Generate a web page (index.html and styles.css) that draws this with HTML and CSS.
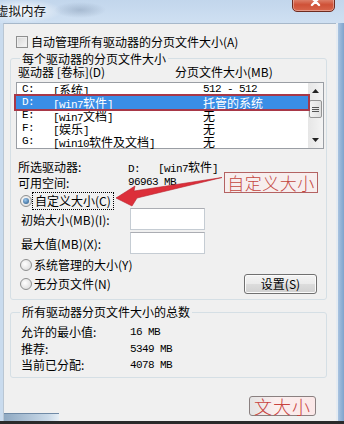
FILE: index.html
```html
<!DOCTYPE html>
<html lang="zh-CN">
<head>
<meta charset="utf-8">
<title>虚拟内存</title>
<link rel="stylesheet" href="styles.css">
</head>
<body>
<div class="window">
  <div class="titlebar">
    <span class="title">虚拟内存</span>
    <div class="close">
      <svg width="43" height="16" viewBox="0 0 43 16"><path d="M20 2 L27 9 M27 2 L20 9" stroke="#fff" stroke-width="2.4" stroke-linecap="round"/></svg>
    </div>
  </div>
  <div class="body">
    <div class="client">
      <div class="check-row"><span class="checkbox"></span><span>自动管理所有驱动器的分页文件大小(A)</span></div>

      <fieldset class="group g1">
        <legend>每个驱动器的分页文件大小</legend>
        <div class="list-head"><span class="h1">驱动器 [卷标](D)</span><span>分页文件大小(MB)</span></div>
        <div class="listbox">
          <div class="rows">
            <div class="row"><span class="c1 m">C:</span><span class="c2"><span class="m">[</span>系统<span class="m">]</span></span><span class="c3 m">512 - 512</span></div>
            <div class="row sel"><span class="c1 m">D:</span><span class="c2"><span class="m">[win7</span>软件<span class="m">]</span></span><span class="c3">托管的系统</span></div>
            <div class="row"><span class="c1 m">E:</span><span class="c2"><span class="m">[win7</span>文档<span class="m">]</span></span><span class="c3">无</span></div>
            <div class="row"><span class="c1 m">F:</span><span class="c2"><span class="m">[</span>娱乐<span class="m">]</span></span><span class="c3">无</span></div>
            <div class="row"><span class="c1 m">G:</span><span class="c2"><span class="m">[win10</span>软件及文档<span class="m">]</span></span><span class="c3">无</span></div>
          </div>
          <div class="scrollbar">
            <div class="sb-btn"><svg width="7" height="4" viewBox="0 0 7 4"><path d="M0 4 L3.5 0 L7 4Z" fill="#222"/></svg></div>
            <div class="sb-track"><div class="sb-thumb"><i></i><i></i><i></i></div></div>
            <div class="sb-btn"><svg width="7" height="4" viewBox="0 0 7 4"><path d="M0 0 L3.5 4 L7 0Z" fill="#222"/></svg></div>
          </div>
        </div>
        <div class="info">
          <div class="info-row"><span class="lab">所选驱动器:</span><span class="val"><span class="m">D:&nbsp;&nbsp;&nbsp;[win7</span>软件<span class="m">]</span></span></div>
          <div class="info-row"><span class="lab">可用空间:</span><span class="val m">96963 MB</span></div>
        </div>
        <div class="radio-row r1"><span class="radio on"></span><span class="focus">自定义大小(C)</span></div>
        <div class="size-row"><span class="size-lab">初始大小(MB)(I):</span><span class="input"></span></div>
        <div class="size-row second"><span class="size-lab">最大值(MB)(X):</span><span class="input"></span></div>
        <div class="radio-row r2"><span class="radio"></span><span>系统管理的大小(Y)</span></div>
        <div class="radio-row r3">
          <span class="radio-wrap"><span class="radio"></span><span>无分页文件(N)</span></span>
          <span class="btn">设置(S)</span>
        </div>
      </fieldset>

      <fieldset class="group g2">
        <legend>所有驱动器分页文件大小的总数</legend>
        <div class="totals">
          <div class="tot-row"><span class="lab">允许的最小值:</span><span class="m">16 MB</span></div>
          <div class="tot-row"><span class="lab">推荐:</span><span class="m">5349 MB</span></div>
          <div class="tot-row"><span class="lab">当前已分配:</span><span class="m">4078 MB</span></div>
        </div>
      </fieldset>

      <div class="bottom-row">
        <span class="strip"></span>
        <span class="ok-btn">文大小</span>
      </div>
    </div>
    <div class="rframe"></div>
  </div>

  <svg class="arrow" width="120" height="40" viewBox="0 0 120 40"><polygon points="6,28 25,16 24,21 112,7.5 27,28 22,36" fill="#dc2f3a" stroke="#b8202c" stroke-width="0.6" stroke-linejoin="round"/></svg>
  <div class="note">自定义大小</div>
</div>
</body>
</html>
```
FILE: styles.css
```css
* { box-sizing: border-box; margin: 0; padding: 0; }
html, body { width: 344px; height: 424px; overflow: hidden; }
body {
  font-family: "Noto Sans CJK SC", "Noto Sans", sans-serif;
  font-size: 12px;
  color: #000;
  background: #f0f0f0;
}
.m {
  font-family: "Liberation Mono", "Noto Sans CJK SC", monospace;
  font-size: 11px;
  letter-spacing: -0.6px;
}

.window {
  position: relative;
  width: 344px;
  height: 424px;
  display: flex;
  flex-direction: column;
  background: #c9dbee;
  border-bottom: 3px solid #2a2a2a;
}

/* title bar */
.titlebar {
  height: 23px;
  flex: none;
  display: flex;
  align-items: flex-start;
  background:
    radial-gradient(ellipse 26px 8px at 80px 10px, rgba(140,160,185,.55), rgba(140,160,185,0)),
    radial-gradient(ellipse 40px 12px at 22px 11px, rgba(255,255,255,.9), rgba(255,255,255,0)),
    linear-gradient(#c2d6ec, #cfe0f2);
}
.title {
  margin-left: -4px;
  margin-top: 3px;
  font-size: 12.5px;
  line-height: 16px;
  color: #111;
}
.close {
  margin-left: auto;
  margin-right: 9px;
  margin-top: -4px;
  width: 43px;
  height: 16px;
  border: 1px solid #6e2b20;
  border-radius: 0 0 5px 5px;
  background: linear-gradient(#e59a86, #cf5137 55%, #d8664c);
  box-shadow: inset 0 0 0 1px rgba(255,255,255,.35);
}
.close svg { display: block; margin: -1px 0 0 -1px; }

/* body */
.body {
  flex: 1;
  display: flex;
  padding-left: 3px;
}
.client {
  width: 333px;
  flex: none;
  display: flex;
  flex-direction: column;
  background: #f0f0f0;
  border-left: 1px solid #b9c6d3;
  border-top: 1px solid #a7b8ca;
}
.rframe {
  flex: 1;
  border-left: 2px solid #e4ebf2;
  background: linear-gradient(to right, #a8c3e0, #7fa3cc);
}

.check-row {
  margin-top: 11px;
  height: 13px;
  padding-left: 12px;
  display: flex;
  align-items: center;
  gap: 3px;
  line-height: 13px;
}
.checkbox {
  width: 12px;
  height: 12px;
  border: 1px solid #8e8f8f;
  background: linear-gradient(135deg, #d6d6d6, #f8f8f8);
  box-shadow: inset 0 0 0 1px #eeeeee;
}

/* group boxes */
.group {
  min-width: 0;
  width: 317px;
  margin-left: 6px;
  border: 1px solid #d5dfe5;
  border-radius: 3px;
  padding: 0 2px 0 5px;
}
.group legend {
  margin-left: 4px;
  padding: 0 2px;
  line-height: 13px;
}
.g1 { margin-top: 4px; padding-bottom: 5px; }
.g2 { margin-top: 5px; padding-bottom: 3px; }
.g2 legend { line-height: 14px; }

.list-head {
  display: flex;
  padding-left: 2px;
  line-height: 14px;
}
.list-head .h1 { width: 157px; }

.listbox {
  margin-top: 3px;
  height: 67px;
  border: 1px solid #9a9ea4;
  background: #fff;
  display: flex;
}
.rows { flex: 1; }
.row {
  display: flex;
  height: 13px;
  line-height: 13px;
  padding-left: 5px;
}
.row .c1 { width: 31px; }
.row .c2 { width: 150px; }
.row.sel {
  background: #3a8ee6;
  color: #fff;
  outline: 2px solid #a83848;
  outline-offset: 0;
  position: relative;
  margin-left: -1px;
  padding-left: 6px;
}

.scrollbar {
  width: 15px;
  display: flex;
  flex-direction: column;
  background: linear-gradient(to right, #e6e6e6, #f4f4f4);
}
.sb-btn {
  height: 16px;
  display: flex;
  align-items: center;
  justify-content: center;
}
.sb-track { flex: 1; }
.sb-thumb {
  height: 18px;
  margin: 1px 1px 0;
  border: 1px solid #959595;
  border-radius: 2px;
  background: linear-gradient(to right, #f2f2f2, #e0e0e0);
  display: flex;
  flex-direction: column;
  align-items: center;
  justify-content: center;
  gap: 1px;
}
.sb-thumb i {
  display: block;
  width: 7px;
  height: 1px;
  background: #555;
}

.info { margin-top: 11px; }
.info-row {
  display: flex;
  line-height: 13px;
  padding-left: 2px;
}
.info-row .lab { width: 110px; }

.radio-row {
  display: flex;
  align-items: center;
  gap: 2px;
  padding-left: 4px;
  height: 14px;
  line-height: 14px;
}
.r1 { margin-top: 5px; }
.radio {
  width: 12px;
  height: 12px;
  border: 1px solid #8e8f8f;
  border-radius: 50%;
  background: radial-gradient(circle at 40% 40%, #ffffff, #d4d4d4);
  display: flex;
  align-items: center;
  justify-content: center;
  flex: none;
}
.radio.on::after {
  content: "";
  width: 6px;
  height: 6px;
  border-radius: 50%;
  background: radial-gradient(circle at 40% 35%, #9cc8ee, #1d4f80);
}
.focus {
  outline: 1px dotted #000;
  outline-offset: 1px;
  padding: 0 1px;
}
.r2 { margin-top: 4px; }
.r3 {
  margin-top: 2px;
  height: 20px;
  justify-content: space-between;
}
.radio-wrap {
  display: flex;
  align-items: center;
  gap: 2px;
}
.btn {
  width: 73px;
  height: 20px;
  margin-right: 7px;
  border: 1px solid #707070;
  border-radius: 3px;
  background: linear-gradient(#f4f4f4, #ebebeb 48%, #dcdcdc 52%, #d0d0d0);
  box-shadow: inset 0 0 0 1px #fbfbfb;
  text-align: center;
  line-height: 18px;
}

.size-row {
  display: flex;
  align-items: center;
  height: 22px;
  padding-left: 5px;
}
.size-row.second { margin-top: 2px; }
.size-lab { width: 109px; }
.input {
  width: 75px;
  height: 22px;
  border: 1px solid #c5ccd3;
  border-top-color: #abadb3;
  background: #fff;
}

.totals { padding-top: 5px; }
.tot-row {
  display: flex;
  line-height: 16.5px;
  padding-left: 5px;
}
.tot-row .lab { width: 109px; }

.bottom-row {
  margin-top: auto;
  height: 25px;
  display: flex;
  justify-content: space-between;
}
.strip {
  align-self: flex-end;
  width: 55px;
  height: 8px;
  border-top: 1px solid #6f8aa6;
  background: linear-gradient(to right, #8fa9c2, #c9d9e8 80%, #e6eef5);
}
.ok-btn {
  align-self: flex-start;
  width: 67px;
  height: 20px;
  margin-right: 20px;
  border: 1px solid #8a8080;
  border-radius: 3px;
  background: linear-gradient(to right, #e4e4e4, #fbeeee 40%, #fbe8e8);
  color: #c8423e;
  font-size: 18px;
  font-weight: 300;
  line-height: 18px;
  text-align: center;
  letter-spacing: 1px;
}

/* annotations overlaid on the screenshot */
.arrow {
  position: absolute;
  left: 110px;
  top: 170px;
}
.note {
  position: absolute;
  left: 224px;
  top: 172px;
  width: 94px;
  height: 21px;
  border: 1px solid #b46262;
  background: rgba(252,236,236,.6);
  color: #c4463f;
  font-size: 17px;
  font-weight: 300;
  line-height: 19px;
  text-align: center;
  letter-spacing: 0.5px;
}
```
